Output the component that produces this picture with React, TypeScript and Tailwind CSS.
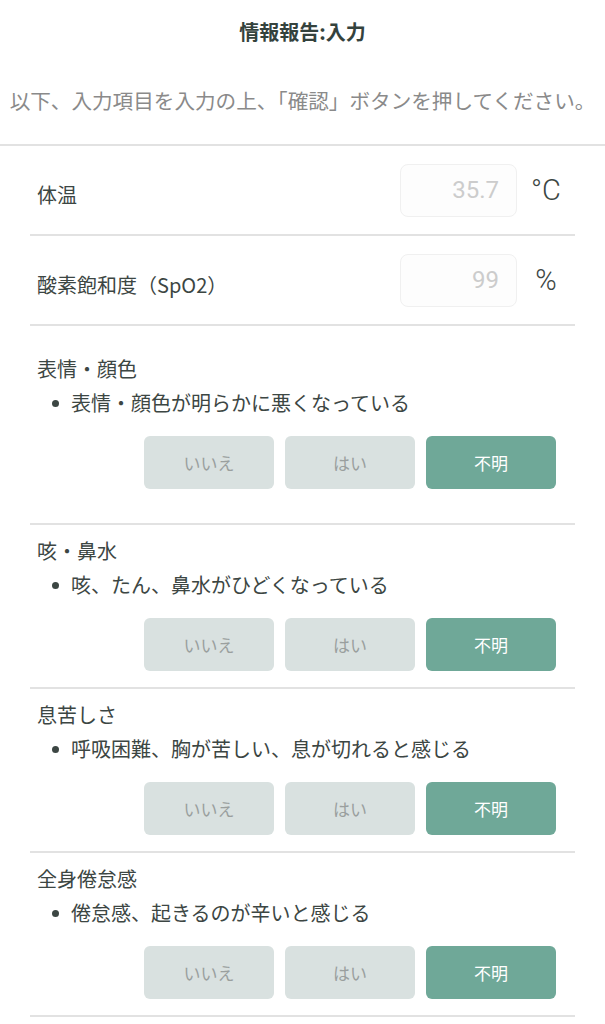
const FONT = { fontFamily: '"Noto Sans CJK JP", "Noto Sans", sans-serif' };
const NUM = { fontFamily: 'Roboto, "Noto Sans CJK JP", sans-serif' };

type Question = { title: string; detail: string };

const questions: Question[] = [
  { title: "表情・顔色", detail: "表情・顔色が明らかに悪くなっている" },
  { title: "咳・鼻水", detail: "咳、たん、鼻水がひどくなっている" },
  { title: "息苦しさ", detail: "呼吸困難、胸が苦しい、息が切れると感じる" },
  { title: "全身倦怠感", detail: "倦怠感、起きるのが辛いと感じる" },
];

const NumberRow = ({ label, value, unit }: { label: string; value: string; unit: string }) => (
  <div className="flex h-[90px] items-center border-b-2 border-[#e2e2e2]">
    <div className="mt-[9px] flex-1 pl-[7px] text-[20px] text-[#3c4643]">{label}</div>
    <div className="flex h-[53px] w-[117px] items-center justify-end rounded-[8px] border border-[#f0f0f0] bg-[#fdfdfd] pr-[17px]">
      <span className="text-[24px] text-[#cccccc]" style={NUM}>{value}</span>
    </div>
    <div className="w-[58px] text-center text-[29px] font-light leading-none text-[#3c4643]" style={NUM}>{unit}</div>
  </div>
);

const Choice = ({ label, active }: { label: string; active?: boolean }) => (
  <button
    className={`h-[53px] w-[130px] rounded-[6px] text-[17px] ${
      active ? "bg-[#6fa898] text-white" : "bg-[#d9e1e0] text-[#9a9f9e]"
    }`}
  >
    {label}
  </button>
);

const QuestionBlock = ({ q, first }: { q: Question; first?: boolean }) => (
  <div className={`border-b-2 border-[#e2e2e2] ${first ? "pt-[29px] pb-[34px]" : "pt-[12px] pb-[16px]"}`}>
    <div className="pl-[7px] text-[20px] leading-[28px] text-[#3c4643]">{q.title}</div>
    <div className="mt-[6px] flex items-center pl-[22px] text-[20px] leading-[28px] text-[#3c4643]">
      <span className="mr-[12px] h-[7px] w-[7px] rounded-full bg-[#3c4643]" />
      {q.detail}
    </div>
    <div className="mt-[19px] flex justify-end gap-[11px] pr-[19px]">
      <Choice label="いいえ" />
      <Choice label="はい" />
      <Choice label="不明" active />
    </div>
  </div>
);

export default function App() {
  return (
    <div className="min-h-[1024px] bg-white" style={FONT}>
      <div className="border-b-2 border-[#e2e2e2] pt-[18px] pb-[30px] text-center">
        <div className="text-[20px] font-bold leading-[28px] text-[#34423d]">情報報告:入力</div>
        <div className="mt-[40px] text-[20.6px] leading-[28px] text-[#8a8a8a]">
          以下、入力項目を入力の上、「確認」ボタンを押してください。
        </div>
      </div>
      <div className="px-[30px]">
        <NumberRow label="体温" value="35.7" unit="°C" />
        <NumberRow label="酸素飽和度（SpO2）" value="99" unit="%" />
        {questions.map((q, i) => (
          <QuestionBlock key={q.title} q={q} first={i === 0} />
        ))}
      </div>
    </div>
  );
}
